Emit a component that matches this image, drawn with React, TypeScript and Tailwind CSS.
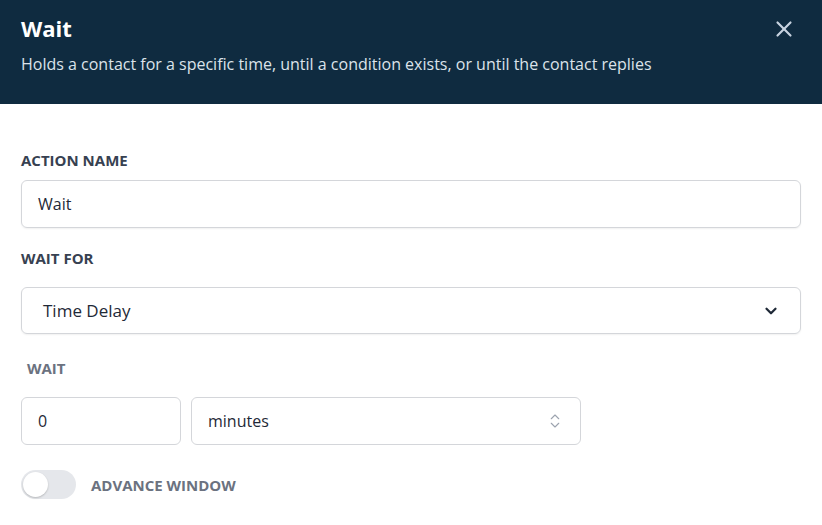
import { X, ChevronDown, ChevronsUpDown } from 'lucide-react'

const Label = ({ children, className = '' }: { children: React.ReactNode; className?: string }) => (
    <div className={`text-[15px] font-bold uppercase leading-[20px] ${className}`}>{children}</div>
)

const App = () => {
    return (
        <div className="min-h-[525px] w-[822px] bg-white font-['Open_Sans',sans-serif] text-[#1f2937]">
            <div className="flex h-[104px] items-start justify-between bg-[#0f2b40] pl-[21px] pr-[25px] pt-[13px]">
                <div>
                    <div className="text-[22px] font-bold leading-[30px] text-white">Wait</div>
                    <div className="mt-[10px] text-[16px] leading-[22px] text-[#dce3ea]">
                        Holds a contact for a specific time, until a condition exists, or until the contact replies
                    </div>
                </div>
                <X className="mt-[3px] h-[26px] w-[26px] text-[#c7d3e0]" strokeWidth={2} />
            </div>

            <div className="flex flex-col px-[21px] pt-[46px]">
                <Label className="text-[#374151]">Action Name</Label>
                <div className="mt-[10px] flex h-[48px] items-center rounded-[6px] border border-[#d4d6da] px-[16px] text-[16px] shadow-[0_1px_2px_rgba(0,0,0,0.06)]">
                    Wait
                </div>

                <Label className="mt-[20px] text-[#374151]">Wait For</Label>
                <div className="mt-[19px] flex h-[47px] items-center justify-between rounded-[6px] border border-[#d4d6da] pl-[21px] pr-[20px] text-[17px] shadow-[0_1px_2px_rgba(0,0,0,0.06)]">
                    <span>Time Delay</span>
                    <ChevronDown className="h-[18px] w-[18px] text-[#1f2937]" strokeWidth={3} />
                </div>

                <Label className="mt-[24px] ml-[6px] text-[#6b7280]">Wait</Label>
                <div className="mt-[19px] flex gap-[10px]">
                    <div className="flex h-[48px] w-[160px] items-center rounded-[6px] border border-[#d4d6da] px-[16px] text-[16px]">
                        0
                    </div>
                    <div className="flex h-[48px] w-[390px] items-center justify-between rounded-[6px] border border-[#d4d6da] pl-[16px] pr-[16px] text-[16px]">
                        <span>minutes</span>
                        <ChevronsUpDown className="h-[18px] w-[18px] text-[#9ca3af]" strokeWidth={1.5} />
                    </div>
                </div>

                <div className="mt-[25px] flex items-center gap-[15px]">
                    <div className="flex h-[29px] w-[55px] items-center rounded-full bg-[#e5e7eb] p-[2px]">
                        <div className="h-[25px] w-[25px] rounded-full bg-white shadow-[0_1px_2px_rgba(0,0,0,0.2)]" />
                    </div>
                    <Label className="text-[#6b7280]">Advance Window</Label>
                </div>
            </div>
        </div>
    )
}

export default App
